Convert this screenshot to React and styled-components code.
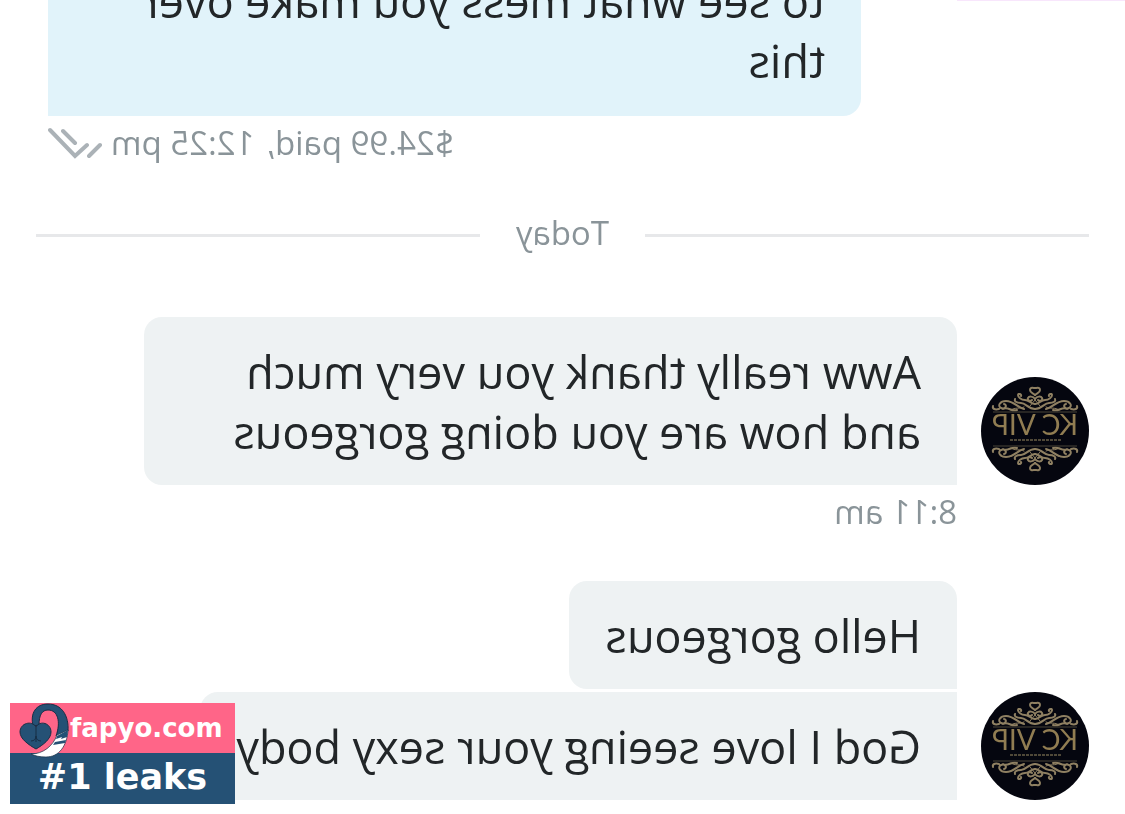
import styled, { createGlobalStyle } from 'styled-components'

const GlobalStyle = createGlobalStyle`
    * {
        box-sizing: border-box;
    }
    body {
        margin: 0;
        overflow: hidden;
        background-color: #ffffff;
        font-family: 'Open Sans', sans-serif;
    }
    p {
        margin: 0;
    }
`

// one quarter of the avatar ornament, reused for all four corners
const Ornament = () => (
    <g fill="none" stroke="#8f8062" strokeLinecap="round">
        <path d="M54 11c-2 0-5-1-5 2s3 3 5 5M54 22c-2-3-6-3-7-1s2 4 4 2" strokeWidth="2" />
        <path d="M54 27c-4 0-6-4-10-4s-7-3-7-5 4-1 3 1M54 32c-7 0-9-6-14-6s-7-2-6-4" strokeWidth="2" />
        <path d="M43 32c-6-1-10-8-18-8-6 0-9 5-5 7s7-3 3-4M36 33c-6 2-9-4-14-1M18 32c-4 1-7 0-6-3" strokeWidth="2" />
        <path d="M49 29l5-6M30 33c4-3 9-1 13-3" strokeWidth="1" />
    </g>
)

const Avatar = () => (
    <AvatarStyle viewBox="0 0 108 108" role="img" aria-label="KC VIP">
        <circle cx="54" cy="54" r="54" fill="#05060f" />
        <Ornament />
        <g transform="matrix(-1 0 0 1 108 0)"><Ornament /></g>
        <g transform="matrix(1 0 0 -1 0 104)"><Ornament /></g>
        <g transform="matrix(-1 0 0 -1 108 104)"><Ornament /></g>
        <path d="M12 35h84M12 69h84" stroke="#4b4538" strokeWidth="1" />
        <path d="M28 63h52" stroke="#4f4838" strokeWidth="2" strokeDasharray="3 1" />
        <text x="54" y="58" textAnchor="middle" fontSize="28" fontFamily="Lato, sans-serif" fill="#917d52">KC VIP</text>
    </AvatarStyle>
)

const DoubleCheck = () => (
    <CheckIcon viewBox="0 0 54 32" aria-hidden="true">
        <path d="M2 18l11 11M15 18l12 11L52 3M27 16L39 4" />
    </CheckIcon>
)

const Logo = () => (
    <LogoStyle viewBox="0 0 50 54" aria-hidden="true">
        <path d="M13 25C10 12 16 3 28 3c14 0 21 12 20 27l-12 5c5-14 2-26-8-26-6 0-9 5-9 15z" fill="#255175" stroke="#172e45" />
        <path d="M48 29c-1 16-9 27-22 27-6 0-11-1-15-3 12 0 22-8 26-19z" fill="#ffffff" stroke="#172e45" strokeWidth="0.7" />
        <path d="M48 29l-11 6-1 3 6-2-1 2 6-2zM46 39l-11 2-2 3 12-2z" fill="#255175" />
        <path d="M16 48C9 44 0 38 0 31c0-9 12-12 16-5 4-7 15-4 15 5 0 7-8 13-15 17z" fill="#255175" stroke="#172e45" />
        <path d="M16 26v15M11 40c3 0 5-2 5-5 0 3 2 5 5 5" fill="none" stroke="#172e45" />
    </LogoStyle>
)

const App = () => {
    return (
        <Screen>
            <GlobalStyle />
            <Chat>
                <UnreadLine />
                <Outgoing>
                    <Bubble $mine>
                        <p>to see what mess you make over this</p>
                    </Bubble>
                    <Meta>
                        <Price>$24.99 paid,</Price>
                        <span>12:25 pm</span>
                        <DoubleCheck />
                    </Meta>
                </Outgoing>
                <Divider>
                    <DayLabel>Today</DayLabel>
                </Divider>
                <Incoming>
                    <Row>
                        <Avatar />
                        <Bubble>
                            <p>Aww really thank you very much and how are you doing gorgeous</p>
                        </Bubble>
                    </Row>
                    <Time>8:11 am</Time>
                </Incoming>
                <Incoming>
                    <Row>
                        <Avatar />
                        <Bubbles>
                            <Bubble>
                                <p>Hello gorgeous</p>
                            </Bubble>
                            <Bubble $last>
                                <p>God I love seeing your sexy body</p>
                            </Bubble>
                        </Bubbles>
                    </Row>
                </Incoming>
            </Chat>
            <Watermark>
                <Site>
                    <Logo />
                    fapyo.com
                </Site>
                <Slogan>#1 leaks</Slogan>
            </Watermark>
        </Screen>
    )
}

export default App

const Screen = styled.div`
    position: relative;
    height: 100vh;
    overflow: hidden;
`

// the whole conversation is flipped horizontally
const Chat = styled.main`
    display: flex;
    flex-direction: column;
    padding: 0 36px;
    margin-top: -52px;
    transform: scaleX(-1);
`

const UnreadLine = styled.div`
    position: absolute;
    top: 52px;
    left: 0;
    width: 168px;
    height: 1px;
    background-color: #f8e6fc;
`

const Bubble = styled.div`
    max-width: 813px;
    padding: ${(props) => (props.$mine ? '23px 36px 25px' : '25px 36px 23px')};
    border-radius: ${(props) => (props.$mine ? '18px 18px 0 18px' : props.$last ? '0 18px 18px 0' : '18px 18px 18px 0')};
    background-color: ${(props) => (props.$mine ? '#e1f3fa' : '#eef2f3')};
    color: #222628;
    font-size: 45px;
    line-height: 60px;
`

const Bubbles = styled.div`
    display: flex;
    flex-direction: column;
    align-items: flex-start;
    gap: 3px;
`

const Outgoing = styled.section`
    display: flex;
    flex-direction: column;
    align-items: flex-end;
    padding-right: 12px;
`

const Incoming = styled.section`
    margin-bottom: 48px;
`

const Row = styled.div`
    display: flex;
    align-items: flex-end;
    gap: 24px;
`

const Meta = styled.div`
    display: flex;
    align-items: center;
    gap: 9px;
    margin-top: 6px;
    color: #8a9499;
    font-size: 33px;
    line-height: 42px;
`

const Price = styled.span`
    margin-right: 3px;
`

const Time = styled(Meta)`
    margin-left: 132px;
`

const Divider = styled.div`
    display: flex;
    align-items: center;
    gap: 36px;
    margin: 48px 0 59px;

    &::before,
    &::after {
        content: '';
        flex: 1;
        height: 3px;
        background-color: #e7e8ea;
    }
`

const DayLabel = styled.span`
    padding-bottom: 4px;
    color: #8a9499;
    font-size: 33px;
    line-height: 42px;
`

const AvatarStyle = styled.svg`
    flex: none;
    width: 108px;
    height: 108px;
`

const CheckIcon = styled.svg`
    width: 54px;
    height: 32px;
    fill: none;
    stroke: #abb2b7;
    stroke-width: 4;
    stroke-linecap: round;
`

const Watermark = styled.aside`
    position: absolute;
    left: 10px;
    bottom: 10px;
    width: 225px;
    color: #ffffff;
    font-family: 'DejaVu Sans', sans-serif;
    font-weight: 700;
`

const Site = styled.div`
    display: flex;
    align-items: center;
    height: 50px;
    padding-left: 10px;
    background-color: #ff6588;
    font-size: 26px;
`

const Slogan = styled.div`
    height: 51px;
    background-color: #255175;
    font-size: 35px;
    line-height: 48px;
    text-align: center;
`

// the tail hangs over the slogan strip
const LogoStyle = styled.svg`
    position: relative;
    flex: none;
    width: 50px;
    height: 54px;
    overflow: visible;
`
